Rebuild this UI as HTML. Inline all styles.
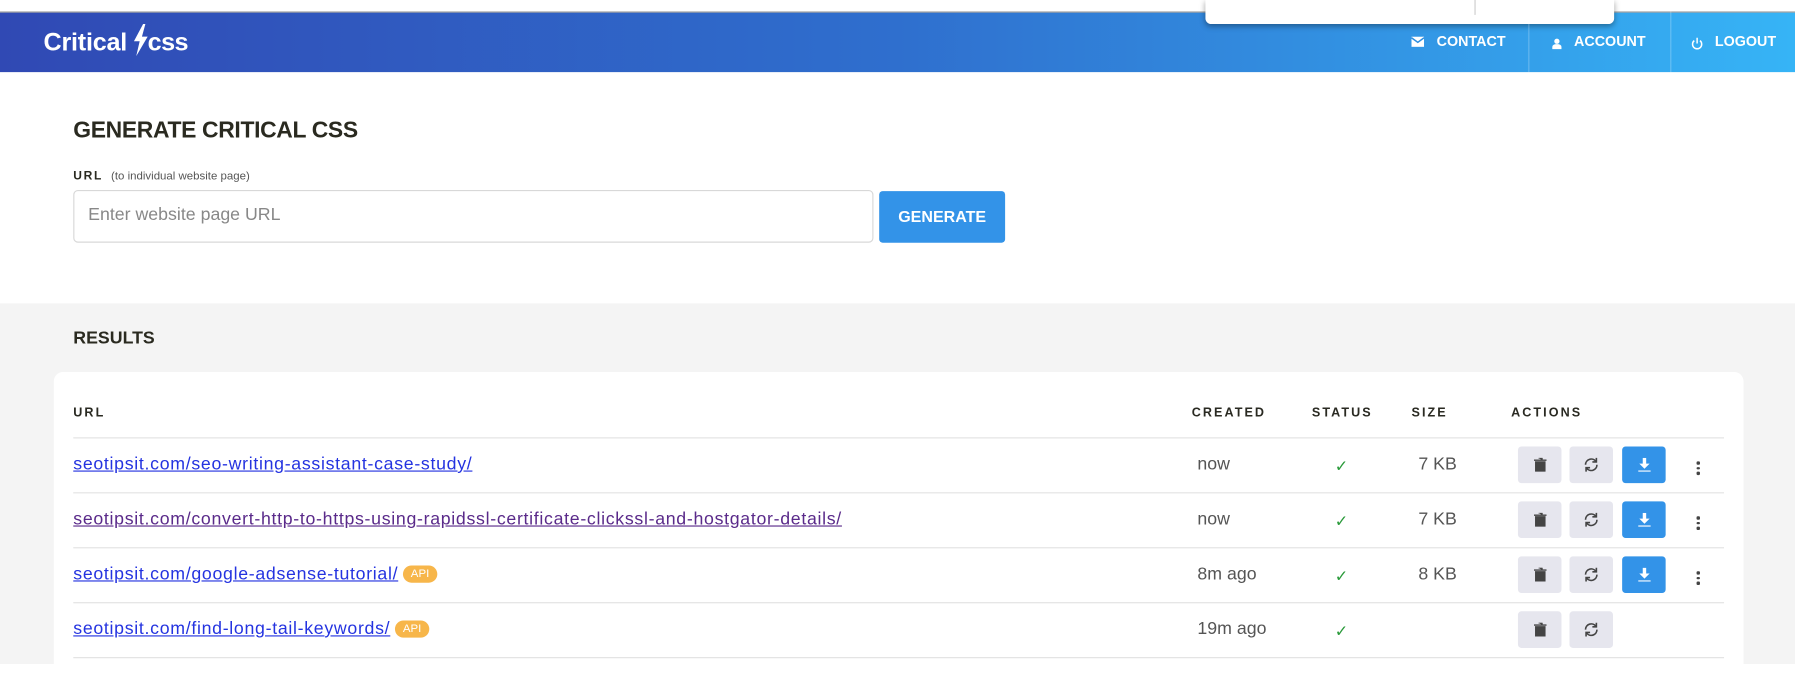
<!DOCTYPE html>
<html><head><meta charset="utf-8">
<style>
*{margin:0;padding:0;box-sizing:border-box}
html,body{width:1795px;height:664px;overflow:hidden;background:#fff;font-family:"Liberation Sans",sans-serif}
#w{position:absolute;left:0;top:0;width:1568px;height:580px;transform:scale(1.14477);transform-origin:0 0}
.a{position:absolute}
.hdr{left:0;top:10px;width:1568px;height:53px;background:linear-gradient(90deg,#3049b4 0%,#2f6fce 50%,#36b4f6 100%);border-top:1px solid #999}
.nav{color:#fff;font-weight:bold;font-size:12.5px;top:29px}
.th{font-size:11px;font-weight:bold;letter-spacing:1.8px;color:#2a2a22;top:355px}
.ln{left:64px;width:1442px;height:1px;background:#e2e2e2}
.lk{left:64px;font-size:15.5px;color:#2433e0;text-decoration:underline;letter-spacing:0.6px;white-space:nowrap}
.api{display:inline-block;background:#f7b64a;color:#fff;font-size:10px;border-radius:8px;padding:2px 7px;vertical-align:2px;text-decoration:none;margin-left:4px;letter-spacing:0}
.cr{left:1046px;font-size:15.5px;color:#555}
.sz{left:1239px;font-size:15.5px;color:#555}
.ck{left:1166px;color:#2a9a3a;font-size:14px}
.bt{width:38px;height:32px;border-radius:3px;background:#e6e6ee;display:flex;align-items:center;justify-content:center}
.bl{background:#3393e8}
.dots{left:1482px;width:3px}
.dots i{display:block;width:2.5px;height:2.5px;background:#444;margin-bottom:2px;border-radius:1px}
</style></head><body><div id="w">
<div class="a hdr"></div>
<div class="a" style="left:1053px;top:0;width:357px;height:21px;background:#fff;border-radius:0 0 5px 5px;box-shadow:0 2px 5px rgba(0,0,0,.35)"><div class="a" style="left:235px;top:0;width:1px;height:13px;background:#ccc"></div></div>
<div class="a" style="left:38px;top:24px;color:#fff;font-size:22px;font-weight:bold;letter-spacing:-0.2px">Critical</div>
<svg class="a" style="left:116px;top:21px" width="14" height="28" viewBox="0 0 14 28"><path d="M9 0L1 15h5L3 28 13 11H8l3-11z" fill="#fff"/></svg>
<div class="a" style="left:129px;top:24px;color:#fff;font-size:22px;font-weight:bold;letter-spacing:-0.5px">css</div>
<svg class="a" style="left:1233px;top:32px" width="11" height="9" viewBox="0 0 11 9"><rect width="11" height="9" fill="#fff"/><path d="M0 1l5.5 4L11 1" stroke="#2f8fe0" stroke-width="1.3" fill="none"/></svg>
<div class="a nav" style="left:1255px">CONTACT</div>
<div class="a" style="left:1335px;top:10px;width:1px;height:53px;background:rgba(255,255,255,.25)"></div>
<svg class="a" style="left:1355px;top:33px" width="10" height="10" viewBox="0 0 10 10"><circle cx="5" cy="3" r="2.3" fill="#fff"/><path d="M1 10v-2q0-2.5 4-2.5t4 2.5v2z" fill="#fff"/></svg>
<div class="a nav" style="left:1375px">ACCOUNT</div>
<div class="a" style="left:1459px;top:10px;width:1px;height:53px;background:rgba(255,255,255,.25)"></div>
<svg class="a" style="left:1477px;top:32px" width="11" height="12" viewBox="0 0 11 12"><path d="M3 3.5A4 4 0 1 0 8 3.5M5.5 1v5" stroke="#fff" stroke-width="1.3" fill="none"/></svg>
<div class="a nav" style="left:1498px">LOGOUT</div>

<div class="a" style="left:64px;top:103px;font-size:20px;font-weight:bold;color:#2a2a20;letter-spacing:-0.3px">GENERATE CRITICAL CSS</div>
<div class="a" style="left:64px;top:148px;font-size:10.5px;color:#2a2a20"><b style="letter-spacing:1.5px">URL</b> <span style="font-size:10px;color:#555;margin-left:4px">(to individual website page)</span></div>
<div class="a" style="left:64px;top:166px;width:699px;height:46px;border:1px solid #d8d8d8;border-radius:4px;color:#888;font-size:15.5px;padding:12px 12px">Enter website page URL</div>
<div class="a" style="left:768px;top:167px;width:110px;height:45px;background:#3393e8;border-radius:3px;color:#fff;font-weight:bold;font-size:14px;text-align:center;line-height:45px">GENERATE</div>

<div class="a" style="left:0;top:265px;width:1568px;height:315px;background:#f4f4f4"></div>
<div class="a" style="left:64px;top:287px;font-size:15.5px;font-weight:bold;color:#2a2a20">RESULTS</div>
<div class="a" style="left:47px;top:325px;width:1476px;height:270px;background:#fff;border-radius:8px"></div>
<div class="a th" style="left:64px">URL</div>
<div class="a th" style="left:1041px">CREATED</div>
<div class="a th" style="left:1146px">STATUS</div>
<div class="a th" style="left:1233px">SIZE</div>
<div class="a th" style="left:1320px">ACTIONS</div>
<div class="a ln" style="top:382px"></div>
<div class="a ln" style="top:430px"></div>
<div class="a ln" style="top:478px"></div>
<div class="a ln" style="top:526px"></div>
<div class="a ln" style="top:574px"></div>

<div class="a lk" style="top:397px">seotipsit.com/seo-writing-assistant-case-study/</div>
<div class="a lk" style="top:445px;color:#5a2a8a">seotipsit.com/convert-http-to-https-using-rapidssl-certificate-clickssl-and-hostgator-details/</div>
<div class="a lk" style="top:493px">seotipsit.com/google-adsense-tutorial/<span class="api">API</span></div>
<div class="a lk" style="top:541px">seotipsit.com/find-long-tail-keywords/<span class="api">API</span></div>

<div class="a cr" style="top:397px">now</div>
<div class="a cr" style="top:445px">now</div>
<div class="a cr" style="top:493px">8m ago</div>
<div class="a cr" style="top:541px">19m ago</div>
<div class="a ck" style="top:399px">✓</div>
<div class="a ck" style="top:447px">✓</div>
<div class="a ck" style="top:495px">✓</div>
<div class="a ck" style="top:543px">✓</div>
<div class="a sz" style="top:397px">7 KB</div>
<div class="a sz" style="top:445px">7 KB</div>
<div class="a sz" style="top:493px">8 KB</div>

<div class="a" style="left:1326px;top:390px">
 <div class="a bt" style="left:0;top:0"><svg width="11" height="12" viewBox="0 0 11 12"><path d="M0 2h11M4 0h3v2M1.5 3.5h8V12h-8z" stroke="#444" stroke-width="1.2" fill="#444"/></svg></div>
 <div class="a bt" style="left:45px;top:0"><svg width="14" height="14" viewBox="0 0 14 14"><path d="M2 7a5 5 0 0 1 9-3M12 7a5 5 0 0 1-9 3" stroke="#444" stroke-width="1.4" fill="none"/><path d="M11.5 1v3.5H8M2.5 13V9.5H6" stroke="#444" stroke-width="1.4" fill="none"/></svg></div>
 <div class="a bt bl" style="left:91px;top:0"><svg width="11" height="12" viewBox="0 0 11 12"><path d="M4 0h3v5h3L5.5 9.5 1 5h3z" fill="#fff"/><rect y="11" width="11" height="1.3" fill="#fff"/></svg></div>
 <div class="a dots" style="left:156px;top:13px"><i></i><i></i><i></i></div>
</div>
<div class="a" style="left:1326px;top:438px">
 <div class="a bt" style="left:0;top:0"><svg width="11" height="12" viewBox="0 0 11 12"><path d="M0 2h11M4 0h3v2M1.5 3.5h8V12h-8z" stroke="#444" stroke-width="1.2" fill="#444"/></svg></div>
 <div class="a bt" style="left:45px;top:0"><svg width="14" height="14" viewBox="0 0 14 14"><path d="M2 7a5 5 0 0 1 9-3M12 7a5 5 0 0 1-9 3" stroke="#444" stroke-width="1.4" fill="none"/><path d="M11.5 1v3.5H8M2.5 13V9.5H6" stroke="#444" stroke-width="1.4" fill="none"/></svg></div>
 <div class="a bt bl" style="left:91px;top:0"><svg width="11" height="12" viewBox="0 0 11 12"><path d="M4 0h3v5h3L5.5 9.5 1 5h3z" fill="#fff"/><rect y="11" width="11" height="1.3" fill="#fff"/></svg></div>
 <div class="a dots" style="left:156px;top:13px"><i></i><i></i><i></i></div>
</div>
<div class="a" style="left:1326px;top:486px">
 <div class="a bt" style="left:0;top:0"><svg width="11" height="12" viewBox="0 0 11 12"><path d="M0 2h11M4 0h3v2M1.5 3.5h8V12h-8z" stroke="#444" stroke-width="1.2" fill="#444"/></svg></div>
 <div class="a bt" style="left:45px;top:0"><svg width="14" height="14" viewBox="0 0 14 14"><path d="M2 7a5 5 0 0 1 9-3M12 7a5 5 0 0 1-9 3" stroke="#444" stroke-width="1.4" fill="none"/><path d="M11.5 1v3.5H8M2.5 13V9.5H6" stroke="#444" stroke-width="1.4" fill="none"/></svg></div>
 <div class="a bt bl" style="left:91px;top:0"><svg width="11" height="12" viewBox="0 0 11 12"><path d="M4 0h3v5h3L5.5 9.5 1 5h3z" fill="#fff"/><rect y="11" width="11" height="1.3" fill="#fff"/></svg></div>
 <div class="a dots" style="left:156px;top:13px"><i></i><i></i><i></i></div>
</div>
<div class="a" style="left:1326px;top:534px">
 <div class="a bt" style="left:0;top:0"><svg width="11" height="12" viewBox="0 0 11 12"><path d="M0 2h11M4 0h3v2M1.5 3.5h8V12h-8z" stroke="#444" stroke-width="1.2" fill="#444"/></svg></div>
 <div class="a bt" style="left:45px;top:0"><svg width="14" height="14" viewBox="0 0 14 14"><path d="M2 7a5 5 0 0 1 9-3M12 7a5 5 0 0 1-9 3" stroke="#444" stroke-width="1.4" fill="none"/><path d="M11.5 1v3.5H8M2.5 13V9.5H6" stroke="#444" stroke-width="1.4" fill="none"/></svg></div>
</div>
</div></body></html>
